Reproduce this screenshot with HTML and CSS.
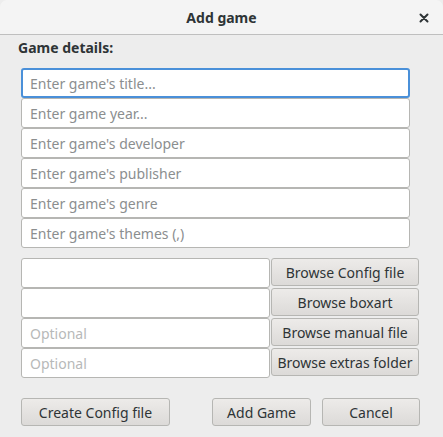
FILE: index.html
```html
<!DOCTYPE html>
<html>
<head>
<meta charset="utf-8">
<link rel="stylesheet" href="styles.css">
</head>
<body>
<div class="dialog">
  <div class="header">
    <span class="title">Add game</span>
    <span class="close">
      <svg width="10" height="10" viewBox="0 0 10 10"><path d="M1.5 1.5 L8.5 8.5 M8.5 1.5 L1.5 8.5" stroke="#2e3436" stroke-width="2" stroke-linecap="round"/></svg>
    </span>
  </div>
  <div class="body">
    <div class="section-label">Game details:</div>
    <div class="fields">
      <input class="entry focus" placeholder="Enter game's title...">
      <input class="entry" placeholder="Enter game year...">
      <input class="entry" placeholder="Enter game's developer">
      <input class="entry" placeholder="Enter game's publisher">
      <input class="entry" placeholder="Enter game's genre">
      <input class="entry" placeholder="Enter game's themes (,)">
    </div>
    <div class="browse-grid">
      <input class="entry">
      <button class="btn">Browse Config file</button>
      <input class="entry">
      <button class="btn">Browse boxart</button>
      <input class="entry optional" placeholder="Optional">
      <button class="btn">Browse manual file</button>
      <input class="entry optional" placeholder="Optional">
      <button class="btn">Browse extras folder</button>
    </div>
    <div class="actions">
      <button class="btn act create">Create Config file</button>
      <div class="right">
        <button class="btn act add">Add Game</button>
        <button class="btn act cancel">Cancel</button>
      </div>
    </div>
  </div>
</div>
</body>
</html>
```

FILE: styles.css
```css
* { box-sizing: border-box; }
html, body { margin: 0; padding: 0; background: #ededed; }
body { font-family: "Noto Sans", "DejaVu Sans", sans-serif; font-size: 14px; color: #2e3436; }
.dialog { width: 443px; height: 437px; background: #ededed; }
.header {
  height: 35px;
  background: #f4f4f4;
  border-bottom: 1px solid #bfbfbf;
  border-radius: 7px 7px 0 0;
  display: flex; align-items: center; justify-content: center;
  position: relative;
}
.title { font-weight: bold; font-size: 14px; }
.close { position: absolute; right: 14px; top: 13px; width: 10px; height: 10px; display: flex; }
.body { padding: 2px 0 0 0; }
.section-label { font-weight: bold; padding-left: 18px; height: 22px; line-height: 22px; }
.fields { display: flex; flex-direction: column; margin: 9px 33px 0 21px; }
.entry {
  height: 30px; width: 100%;
  border: 1px solid #b6b6b3;
  border-radius: 3px;
  background: #ffffff;
  font-family: inherit; font-size: 14px; color: #2e3436;
  padding: 0 8px;
  outline: none;
  margin: 0;
}
.fields .entry + .entry { margin-top: 0; }
.entry::placeholder { color: #8b8e8f; }
.entry.optional::placeholder { color: #b7b9b9; }
.entry.focus { border: 2px solid #4a90d9; padding: 0 7px; }
.browse-grid {
  display: grid;
  grid-template-columns: 249px 148px;
  column-gap: 1px;
  margin: 10px 0 0 21px;
}
.btn {
  font-family: inherit; font-size: 14px; color: #2e3436;
  border: 1px solid #b6b6b3;
  border-radius: 3px;
  background: linear-gradient(#edebe9, #dcdad8);
  padding: 0;
  margin: 0;
}
.browse-grid .btn { height: 28px; margin-bottom: 2px; }
.actions { display: flex; justify-content: space-between; margin: 20px 23px 0 21px; }
.act { height: 28px; }
.create { width: 149px; }
.right { display: flex; gap: 11px; }
.add { width: 99px; }
.cancel { width: 98px; }
```
